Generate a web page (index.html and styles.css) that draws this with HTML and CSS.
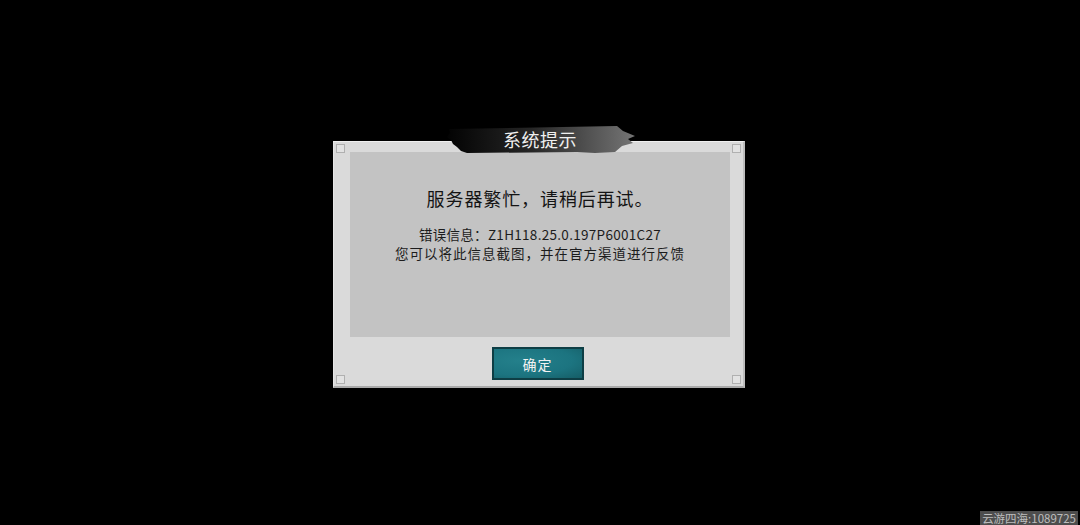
FILE: index.html
```html
<!DOCTYPE html>
<html lang="zh">
<head>
<meta charset="utf-8">
<link rel="stylesheet" href="styles.css">
</head>
<body>
<div class="stage">
  <div class="dialog">
    <div class="banner">
      <svg class="banner-bg" width="192" height="30" viewBox="0 0 192 30">
        <defs>
          <linearGradient id="bg" x1="0" y1="0" x2="1" y2="0">
            <stop offset="0" stop-color="#030303"/>
            <stop offset="0.45" stop-color="#262626"/>
            <stop offset="1" stop-color="#757575"/>
          </linearGradient>
        </defs>
        <polygon fill="url(#bg)" points="2,4 170,1 176,6 188,11 181,14 186,18 175,21 168,27 148,28 130,27 20,28 14,26 10,22 6,19 4,15 0,12 3,8"/>
      </svg>
      <span class="banner-title">系统提示</span>
    </div>
    <span class="corner tl"></span>
    <span class="corner tr"></span>
    <span class="corner bl"></span>
    <span class="corner br"></span>
    <div class="panel">
      <div class="msg">服务器繁忙，请稍后再试。</div>
      <div class="detail">错误信息：Z1H118.25.0.197P6001C27</div>
      <div class="detail wide">您可以将此信息截图，并在官方渠道进行反馈</div>
    </div>
    <div class="actions">
      <button class="ok">确定</button>
    </div>
  </div>
  <div class="watermark">云游四海:1089725</div>
</div>
</body>
</html>
```
FILE: styles.css
```css
html, body {
  margin: 0;
  padding: 0;
  background: #000;
}
.stage {
  position: relative;
  width: 1080px;
  height: 525px;
  padding: 141px 0 0 333px;
  box-sizing: border-box;
  font-family: "Noto Sans CJK SC", "Noto Sans", sans-serif;
}
.dialog {
  position: relative;
  width: 412px;
  height: 247px;
  box-sizing: border-box;
  background: #dadada;
  border-top: 1px solid #efefef;
  border-left: 1px solid #e6e6e6;
  border-right: 2px solid #bdbdbd;
  border-bottom: 2px solid #a9a9a9;
  padding: 10px 13px 0 16px;
  display: flex;
  flex-direction: column;
}
.panel {
  height: 185px;
  background: #c3c3c3;
  display: flex;
  flex-direction: column;
  align-items: center;
  padding-top: 33px;
  box-sizing: border-box;
}
.msg {
  font-size: 18px;
  color: #141414;
  line-height: 26px;
  letter-spacing: 0.9px;
  margin-bottom: 14px;
}
.detail {
  font-size: 13.5px;
  color: #1c1c1c;
  line-height: 19px;
  letter-spacing: 0.3px;
}
.detail.wide {
  letter-spacing: 1px;
}
.actions {
  display: flex;
  justify-content: center;
  padding-top: 10px;
  padding-right: 5px;
}
.ok {
  width: 92px;
  height: 33px;
  box-sizing: border-box;
  border: 2px solid #0e3e45;
  background: radial-gradient(ellipse at 30% 40%, #24808b 0%, #1c7480 60%, #155d66 100%);
  color: #f2f2f2;
  font-family: "Noto Sans CJK SC", "Noto Sans", sans-serif;
  font-size: 14px;
  letter-spacing: 1px;
  padding: 0;
}
.banner {
  position: absolute;
  left: 113px;
  top: -17px;
  width: 192px;
  height: 30px;
  display: flex;
  align-items: center;
  justify-content: center;
}
.banner-bg {
  position: absolute;
  left: 0;
  top: 0;
}
.banner-title {
  position: relative;
  color: #f0f0f0;
  font-size: 18px;
  letter-spacing: 0.5px;
  margin-left: -6px;
  margin-top: -2px;
}
.corner {
  position: absolute;
  width: 7px;
  height: 7px;
  border: 1px solid #b0b0b0;
  background: #e2e2e2;
}
.corner.tl { left: 2px; top: 2px; }
.corner.tr { right: 2px; top: 2px; }
.corner.bl { left: 2px; bottom: 2px; }
.corner.br { right: 2px; bottom: 2px; }
.watermark {
  position: absolute;
  right: 2px;
  bottom: 0;
  height: 14px;
  padding: 0 2px;
  background: #4d4d4d;
  color: #bdbdbd;
  font-size: 11.5px;
  line-height: 14px;
  font-family: "Noto Sans CJK SC", "Liberation Sans", sans-serif;
}
```
